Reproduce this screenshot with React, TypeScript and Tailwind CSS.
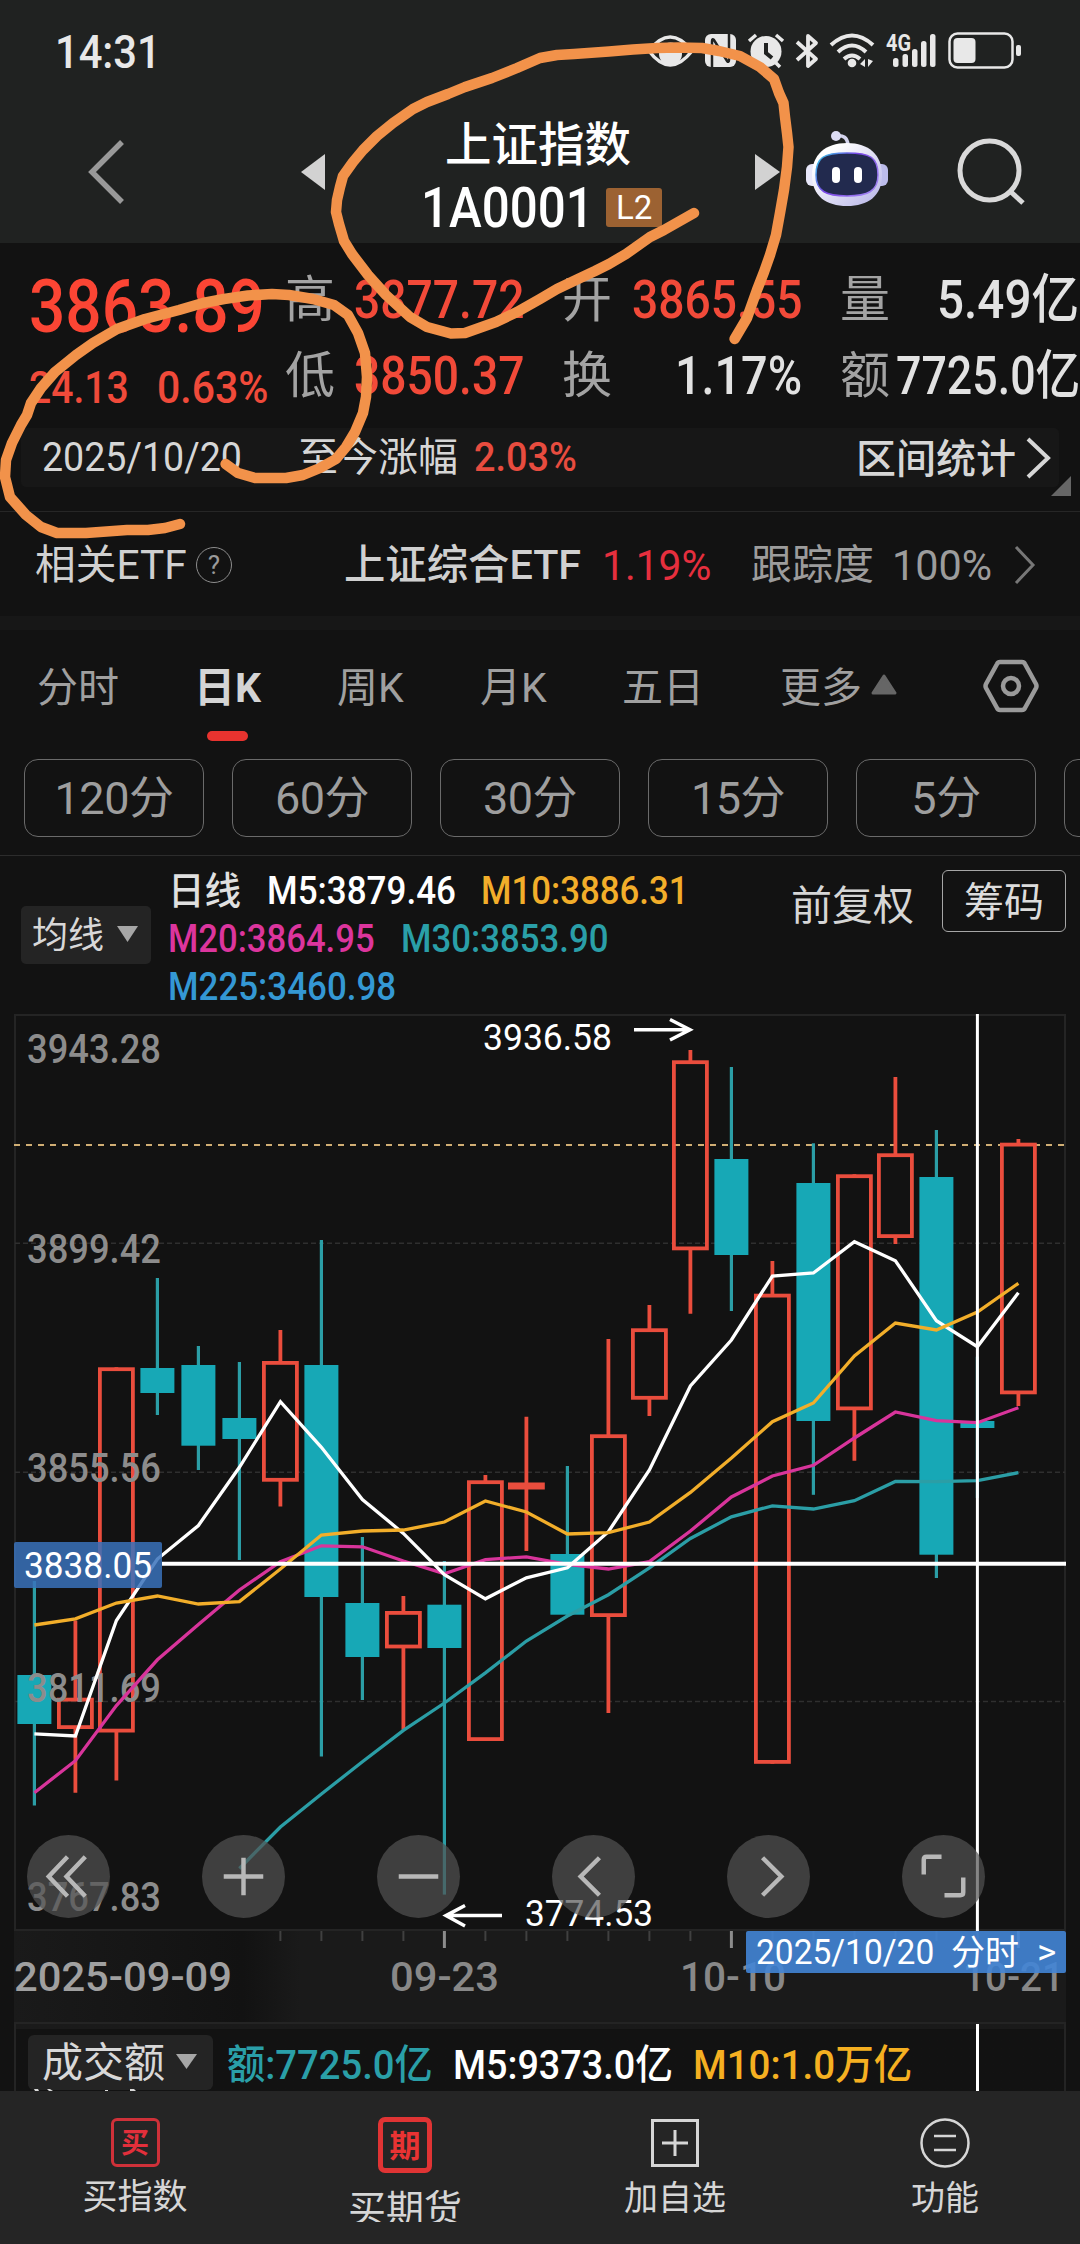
import { useLayoutEffect, useRef, useState } from "react";
import type { ReactNode } from "react";
import clsx from "clsx";

type Candle = { up: boolean; high: number; top: number; bottom: number; low: number };

const step = 41;
const firstX = 34.4;
const xAt = (i: number) => firstX + i * step;

const candles: Candle[] = [
  { up: false, high: 1581, top: 1675, bottom: 1724, low: 1805.5 },
  { up: true, high: 1620.5, top: 1697.7, bottom: 1729, low: 1792.7 },
  { up: true, high: 1367.3, top: 1367.3, bottom: 1732.5, low: 1780.6 },
  { up: false, high: 1278, top: 1368, bottom: 1393, low: 1415 },
  { up: false, high: 1346, top: 1365, bottom: 1445.7, low: 1470 },
  { up: false, high: 1362, top: 1418, bottom: 1439, low: 1560 },
  { up: true, high: 1330, top: 1361, bottom: 1481.7, low: 1506.5 },
  { up: false, high: 1240, top: 1365, bottom: 1597, low: 1756.5 },
  { up: false, high: 1537, top: 1603, bottom: 1657, low: 1700 },
  { up: true, high: 1596, top: 1611, bottom: 1648.4, low: 1729.7 },
  { up: false, high: 1561, top: 1604.7, bottom: 1648, low: 1894.6 },
  { up: true, high: 1475, top: 1480.3, bottom: 1741, low: 1741 },
  { up: true, high: 1416.7, top: 1482.5, bottom: 1489.5, low: 1551 },
  { up: false, high: 1466, top: 1554, bottom: 1614.7, low: 1614.7 },
  { up: true, high: 1339, top: 1434.3, bottom: 1617, low: 1713 },
  { up: true, high: 1305, top: 1328.3, bottom: 1399.7, low: 1416 },
  { up: true, high: 1050, top: 1060.3, bottom: 1250.3, low: 1313.7 },
  { up: false, high: 1067, top: 1159, bottom: 1255, low: 1311 },
  { up: true, high: 1261, top: 1293.7, bottom: 1763.8, low: 1763.8 },
  { up: false, high: 1143.3, top: 1183, bottom: 1421, low: 1494.8 },
  { up: true, high: 1174.3, top: 1174.3, bottom: 1410.3, low: 1460.7 },
  { up: true, high: 1077, top: 1153.3, bottom: 1238, low: 1244 },
  { up: false, high: 1130, top: 1177, bottom: 1554.7, low: 1578 },
  { up: false, high: 1356.7, top: 1421, bottom: 1428, low: 1498 },
  { up: true, high: 1139, top: 1142.7, bottom: 1394.3, low: 1406 },
];

const averages = [
  { color: "#2b9ea6", from: 5, ys: [1868.5, 1827, 1794, 1761.7, 1730.4, 1703, 1672.9, 1641, 1616, 1594.7, 1567.8, 1538.5, 1516.8, 1505.8, 1509, 1500.7, 1481.4, 1481.7, 1480.7, 1472.7] },
  { color: "#d8349b", from: 0, ys: [1792.7, 1760.7, 1705.6, 1659.8, 1624.6, 1590, 1561.6, 1545.8, 1546.8, 1561, 1573.7, 1559.6, 1556.8, 1564.4, 1569, 1561.6, 1531, 1497, 1476, 1465.3, 1438, 1412, 1420.7, 1422.7, 1407.7] },
  { color: "#ffffff", from: 0, ys: [1733.8, 1736, 1620.5, 1559, 1525.5, 1467.3, 1401.7, 1447.3, 1499.6, 1533.4, 1574.7, 1598.8, 1577.8, 1567.8, 1531.7, 1470, 1386, 1340, 1276, 1273, 1241.7, 1260.7, 1320.7, 1346.7, 1292.7] },
  { color: "#f2ae2a", from: 0, ys: [1625, 1618.8, 1603, 1596, 1604, 1601.6, 1569, 1535, 1531, 1530, 1522, 1501, 1512, 1534, 1532.7, 1522, 1492.4, 1458, 1421.7, 1403, 1356, 1323, 1330, 1312, 1283.3] },
];

const priceLabels = [
  { text: "3943.28", y: 1062.7 },
  { text: "3899.42", y: 1262.7 },
  { text: "3855.56", y: 1481.7 },
  { text: "3811.69", y: 1702 },
  { text: "3767.83", y: 1910.5 },
];

const dateLabels = [
  { text: "2025-09-09", x: 14, width: 218, color: "#a0a0a0" },
  { text: "09-23", x: 390, width: 109, color: "#888888" },
  { text: "10-10", x: 680, width: 106, color: "#888888" },
  { text: "10-21", x: 963, width: 101, color: "#888888" },
];

const markerStrokes = [
  "694,213 664,230 650,237 626,254 609,264 595,271 578,279 557,289 540,299 517,312 496,322 465,333 451,333.5 427,327 410,317 386,295 368,275 352,254 344,241 339,224 336,212 337,200 340,187 343,176 353,162 363,150 377,136 393,123 413,109 427,102 448,94 465,87 492,78 517,68 540,58 557,55 574,54 609,51.5 633,49.5 657,48 678,47.5 702,48 719,51 740,56 760,67 774,79 779,93 783.5,103 785,117 787,133 788.5,147 787,167 784,190 780,213 776,235 770,255 764,272 757,290 747,318 734.6,339",
  "225.6,464 238,473 255,478 286,478 303,475 320,468 336,459 346,447 355,432 363,413 366,397 367,377 365,353 358,333 348,315 334,305 313,299 289,295 272,294 248,295.5 224,299 203,303 179,310 145,319 117,329 93,343 76,355 55,372 41,388 31,403 27,415 21,425 12,443 6,460 5,477 10,497 26,515 41,527 57,533 86,533 127,530 148,530 165,528 180,524",
];

/* Squeezes one line of text into the width of its box */
function Fit({ className, children }: { className?: string; children: ReactNode }) {
  const box = useRef<HTMLSpanElement>(null);
  const inner = useRef<HTMLSpanElement>(null);
  const [ratio, setRatio] = useState(1);

  useLayoutEffect(() => {
    if (box.current && inner.current && inner.current.offsetWidth) {
      setRatio(box.current.clientWidth / inner.current.offsetWidth);
    }
  }, [children]);

  return (
    <span ref={box} className={clsx("block shrink-0 whitespace-nowrap leading-none", className)}>
      <span ref={inner} className="inline-block origin-left whitespace-pre align-top" style={{ transform: `scaleX(${ratio})` }}>
        {children}
      </span>
    </span>
  );
}

function StatusBar() {
  return (
    <div className="flex h-[102px] items-center justify-between pl-[55px] pr-[55px]">
      <Fit className="mt-px w-[106px] text-[46px] font-medium text-[#e8e8e8]">14:31</Fit>
      <svg width="380" height="44" viewBox="645 29 380 44" fill="#e8e8e8">
        <path d="M649 51Q670 23 692 51Q670 79 649 51Z" fill="none" stroke="#e8e8e8" strokeWidth="3.5" />
        <circle cx="670.5" cy="54" r="11.5" />
        <rect x="705" y="34" width="31" height="33" rx="6" />
        <path d="M712 67V41Q712 38 714 40L727 61Q729 63 729 60V34" fill="none" stroke="#202221" strokeWidth="2.500" />
        <circle cx="766" cy="51.5" r="15.5" />
        <path d="M749 41L756 35M776 35L783 41M757 62L752 67M775 62L780 67" stroke="#e8e8e8" strokeWidth="3.5" />
        <path d="M766 43V53L772 58" fill="none" stroke="#202221" strokeWidth="4" />
        <path d="M797 42L816 59L808 66V36L816 43L797 60" fill="none" stroke="#e8e8e8" strokeWidth="3.8" strokeLinejoin="round" />
        <path d="M831 45Q852 26 873 45M838 52Q852 39 866 52M844 59Q852 52 860 59" fill="none" stroke="#e8e8e8" strokeWidth="4" />
        <circle cx="852" cy="63" r="4.3" />
        <path d="M860 64L865 59V67ZM873 61L868 67V59Z" />
        <text x="886" y="51" className="font-[Roboto] text-[24px] font-bold" textLength="25" lengthAdjust="spacingAndGlyphs">4G</text>
        <rect x="893" y="58" width="5.5" height="9" rx="2.5" />
        <rect x="902.5" y="54" width="5.5" height="13" rx="2.5" />
        <rect x="912" y="49" width="5.5" height="18" rx="2.5" />
        <rect x="921" y="41" width="5.5" height="26" rx="2.5" />
        <rect x="930" y="34" width="5.5" height="33" rx="2.5" />
        <rect x="949.5" y="33.5" width="63" height="34" rx="8" fill="none" stroke="#e8e8e8" strokeWidth="2.5" />
        <rect x="953.5" y="38" width="22" height="25" rx="4" />
        <rect x="1016" y="45" width="5" height="11" rx="2" />
      </svg>
    </div>
  );
}

function Robot() {
  return (
    <svg width="82" height="76" viewBox="0 0 82 76" className="shrink-0">
      <defs>
        <linearGradient id="shell" x1="0" y1="0" x2="1" y2="1">
          <stop offset="0.2" stopColor="#ffffff" />
          <stop offset="1" stopColor="#b4b2e6" />
        </linearGradient>
        <linearGradient id="rim" x1="0" y1="0" x2="1" y2="0.6">
          <stop offset="0" stopColor="#2fd0e6" />
          <stop offset="0.5" stopColor="#7a45e8" />
          <stop offset="1" stopColor="#9b7cf0" />
        </linearGradient>
      </defs>
      <path d="M30 5Q41 3 42 14" fill="none" stroke="#d4d4ee" strokeWidth="3.5" />
      <circle cx="30" cy="5" r="5" fill="#dcdcf4" />
      <rect x="0" y="33" width="14" height="22" rx="6" fill="#e8e8fa" />
      <rect x="68" y="33" width="14" height="22" rx="6" fill="#bcbcea" />
      <path d="M41 12C63 12 76 24 76 44C76 65 62 75 41 75C20 75 6 65 6 44C6 24 19 12 41 12Z" fill="url(#shell)" />
      <path d="M41 22C64 22 72 26 72 44C72 60 62 65 41 65C20 65 10 60 10 44C10 26 18 22 41 22Z" fill="#222a4e" stroke="url(#rim)" strokeWidth="1.5" />
      <rect x="26" y="36" width="8" height="16" rx="4" fill="#ffffff" />
      <rect x="48" y="36" width="8" height="16" rx="4" fill="#ffffff" />
    </svg>
  );
}

function Header() {
  return (
    <div className="flex h-[141px] pl-[88px]">
      <svg width="38" height="66" viewBox="0 0 38 66" className="mt-[37px]">
        <path d="M34 3L4 33L34 63" fill="none" stroke="#999999" strokeWidth="5.5" />
      </svg>
      <svg width="24" height="36" viewBox="0 0 24 36" className="ml-[175px] mt-[52px]">
        <path d="M24 0V36L0 18Z" fill="#d2d2d2" />
      </svg>
      <div className="ml-[96px] flex w-[244px] flex-col text-white">
        <div className="ml-[24px] mt-[20px] text-[46.5px] font-medium leading-none">上证指数</div>
        <div className="mt-[11px] flex items-center">
          <Fit className="mt-px w-[173px] text-[55px] font-medium">1A0001</Fit>
          <span className="ml-[12px] flex h-[39px] w-[56px] items-center justify-center rounded-[3px] bg-[#9c6232]">
            <Fit className="w-[36px] text-[33px]">L2</Fit>
          </span>
        </div>
      </div>
      <svg width="25" height="36" viewBox="0 0 25 36" className="ml-[90px] mt-[52px]">
        <path d="M0 0V36L25 18Z" fill="#d2d2d2" />
      </svg>
      <div className="ml-[26px] mt-[29px]">
        <Robot />
      </div>
      <svg width="70" height="68" viewBox="0 0 70 68" className="ml-[68px] mt-[35px]">
        <circle cx="33.5" cy="33.5" r="29.5" fill="none" stroke="#d9d9d9" strokeWidth="5" />
        <path d="M55 55L67 66" stroke="#d9d9d9" strokeWidth="5" />
      </svg>
    </div>
  );
}

function Quote() {
  return (
    <section className="h-[269px] border-b border-[#262626] pt-[19px]">
      <div className="flex">
        <div className="w-[285px] pl-[29px] pt-[8px] font-medium text-[#fb4534]">
          <Fit className="w-[236px] text-[74px]">3863.89</Fit>
          <div className="mt-[21px] flex text-[#f04a3a]">
            <Fit className="w-[100px] text-[45px]">24.13</Fit>
            <Fit className="ml-[28px] w-[111px] text-[45px]">0.63%</Fit>
          </div>
        </div>
        <div className="text-[53px] leading-none">
          <div className="flex h-[76px] items-center">
            <span className="w-[50px] text-[50px] text-[#a3a3a3]">高</span>
            <Fit className="ml-[19px] w-[170px] font-medium text-[#f24a39]">3877.72</Fit>
            <span className="ml-[38px] w-[50px] text-[50px] text-[#a3a3a3]">开</span>
            <Fit className="ml-[20px] w-[170px] font-medium text-[#f24a39]">3865.55</Fit>
            <span className="ml-[38px] w-[50px] text-[50px] text-[#a3a3a3]">量</span>
            <Fit className="ml-[47px] w-[142px] font-medium text-[#e2e2e2]">5.49亿</Fit>
          </div>
          <div className="flex h-[76px] items-center">
            <span className="w-[50px] text-[50px] text-[#a3a3a3]">低</span>
            <Fit className="ml-[19px] w-[170px] font-medium text-[#f24a39]">3850.37</Fit>
            <span className="ml-[38px] w-[50px] text-[50px] text-[#a3a3a3]">换</span>
            <Fit className="ml-[63px] w-[127px] font-medium text-[#e2e2e2]">1.17%</Fit>
            <span className="ml-[38px] w-[50px] text-[50px] text-[#a3a3a3]">额</span>
            <Fit className="ml-[6px] w-[184px] font-medium text-[#e2e2e2]">7725.0亿</Fit>
          </div>
        </div>
      </div>

      <div className="relative ml-[21px] mt-[14px] flex h-[59px] w-[1038px] items-center rounded-[5px] bg-[#171717] text-[40px] leading-none text-[#d6d6d6]">
        <Fit className="ml-[21px] w-[200px]">2025/10/20</Fit>
        <span className="ml-[56px] text-[40px]">至今涨幅</span>
        <Fit className="ml-[16px] w-[103px] font-medium text-[#e84c3f]">2.03%</Fit>
        <span className="ml-[279px] mt-[5px] text-[40px] font-medium">区间统计</span>
        <svg width="26" height="42" viewBox="0 0 26 42" className="ml-[9px]">
          <path d="M3 2L23 21L3 40" fill="none" stroke="#d6d6d6" strokeWidth="4" />
        </svg>
        <svg width="20" height="20" viewBox="0 0 20 20" className="absolute -right-[12px] top-[48px]">
          <path d="M20 0V20H0Z" fill="#666666" />
        </svg>
      </div>
    </section>
  );
}

function EtfRow() {
  return (
    <section className="flex h-[104px] items-center pt-[2px] text-[41px] leading-none text-[#d0d0d0]">
      <Fit className="ml-[35px] w-[152px]">相关ETF</Fit>
      <span className="ml-[9px] flex h-[36px] w-[36px] items-center justify-center rounded-full border-[1.5px] border-[#8d8d8d] text-[26px] text-[#9a9a9a]">?</span>
      <Fit className="ml-[112px] w-[237px] font-medium">上证综合ETF</Fit>
      <Fit className="ml-[21px] w-[109px] text-[43px] text-[#e62f3e]">1.19%</Fit>
      <span className="ml-[40px] w-[123px] text-[#9c9c9c]">跟踪度</span>
      <Fit className="ml-[18px] w-[100px] text-[43px] text-[#9c9c9c]">100%</Fit>
      <svg width="24" height="40" viewBox="0 0 24 40" className="ml-[21px]">
        <path d="M3 2L20 20L3 38" fill="none" stroke="#777777" strokeWidth="3" />
      </svg>
    </section>
  );
}

function Tabs() {
  return (
    <section className="flex h-[129px] items-start pt-[37px] text-[41px] leading-[42px] text-[#a0a0a0]">
      <span className="ml-[37px] w-[82px]">分时</span>
      <span className="ml-[74px] flex w-[69px] flex-col items-center font-bold text-[#d4d4d4]">
        <span>日K</span>
        <span className="mt-[22px] h-[10px] w-[41px] rounded-full bg-[#e8332f]" />
      </span>
      <span className="ml-[75px] w-[69px]">周K</span>
      <span className="ml-[74px] w-[69px]">月K</span>
      <span className="ml-[73px] w-[82px]">五日</span>
      <span className="ml-[76px] w-[82px]">更多</span>
      <svg width="26" height="21" viewBox="0 0 26 21" className="ml-[9px] mt-[7px]">
        <path d="M13 2L24 19H2Z" fill="#666666" stroke="#666666" strokeWidth="3" strokeLinejoin="round" />
      </svg>
      <svg width="56" height="54" viewBox="0 0 56 54" className="ml-[86px] mt-[-8px]" fill="none" stroke="#9a9a9a">
        <path d="M17 3H39Q41 3 42 5L53 25Q54 27 53 29L42 49Q41 51 39 51H17Q15 51 14 49L3 29Q2 27 3 25L14 5Q15 3 17 3Z" strokeWidth="4.5" />
        <circle cx="28" cy="27" r="8" strokeWidth="4.5" />
      </svg>
    </section>
  );
}

function Periods() {
  return (
    <section className="h-[97px] overflow-hidden border-b border-[#2c2c2c]">
      <div className="flex w-[1300px] gap-[28px] pl-[24px]">
        {["120分", "60分", "30分", "15分", "5分", "1分"].map((name) => (
          <div key={name} className="flex h-[78px] w-[180px] shrink-0 items-center justify-center rounded-[14px] border border-[#6a6a6a] text-[45px] leading-none tracking-[-0.5px] text-[#9e9e9e]">
            {name}
          </div>
        ))}
      </div>
    </section>
  );
}

function Legend() {
  return (
    <section className="flex h-[158px] pl-[21px] leading-none">
      <div className="mt-[50px] flex h-[58px] w-[130px] items-center rounded-[5px] bg-[#242424] pl-[11px] pt-[2px] text-[36px] text-[#d8d8d8]">
        均线
        <svg width="21" height="16" viewBox="0 0 21 16" className="-mt-[4px] ml-[13px]">
          <path d="M0 0H21L10.5 16Z" fill="#a6a6a6" />
        </svg>
      </div>
      <div className="ml-[17px] mt-[16px] flex w-[560px] flex-col gap-[10px] text-[38px] font-medium">
        <div className="flex">
          <Fit className="w-[73px] text-[#e0e0e0]">日线</Fit>
          <Fit className="ml-[26px] w-[189px] text-white">M5:3879.46</Fit>
          <Fit className="ml-[25px] w-[208px] text-[#f2ae2a]">M10:3886.31</Fit>
        </div>
        <div className="flex">
          <Fit className="w-[207px] text-[#dc359d]">M20:3864.95</Fit>
          <Fit className="ml-[26px] w-[208px] text-[#2a9fa8]">M30:3853.90</Fit>
        </div>
        <Fit className="w-[228px] text-[#3498d4]">M225:3460.98</Fit>
      </div>
      <span className="ml-[63px] mt-[30px] w-[123px] text-[41px] text-[#d6d6d6]">前复权</span>
      <div className="ml-[28px] mt-[14px] flex h-[62px] w-[124px] items-center justify-center rounded-[6px] border border-[#a6a6a6] pt-[3px] text-[40px] text-[#dcdcdc]">
        筹码
      </div>
    </section>
  );
}

function Chart() {
  return (
    <svg width="1080" height="1008" viewBox="0 1014 1080 1008" className="block font-[Roboto]">
      <defs>
        <linearGradient id="axisFade" x1="0" y1="0" x2="1" y2="0">
          <stop offset="0" stopColor="#1a1a1a" />
          <stop offset="0.4" stopColor="#161616" />
          <stop offset="0.8" stopColor="#121212" />
          <stop offset="1" stopColor="#1a1a1a" />
        </linearGradient>
      </defs>

      {/* frame and grid */}
      <rect x="15" y="1015" width="1050" height="915" fill="none" stroke="#242424" strokeWidth="2" />
      {[1243.3, 1472.3, 1701.5].map((y) => (
        <path key={y} d={`M15 ${y}H1065`} stroke="#2f2f2f" strokeWidth="1.5" strokeDasharray="5 3" />
      ))}
      <path d="M14 1145H1065" stroke="#d0ae74" strokeWidth="2" strokeDasharray="6 6" />

      {/* candles */}
      {candles.map((c, i) => {
        const x = xAt(i);
        if (!c.up) {
          return (
            <g key={i} fill="#17a8b6">
              <rect x={x - 1.6} y={c.high} width="3.2" height={c.low - c.high} fill="#2b9ea6" />
              <rect x={x - 17} y={c.top} width="34" height={c.bottom - c.top} />
            </g>
          );
        }
        return (
          <g key={i} fill="none" stroke="#ea4d3d" strokeWidth="3.8">
            <path d={`M${x} ${c.high}V${c.top + 1}M${x} ${c.bottom - 1}V${c.low}`} />
            <rect x={x - 16.5} y={c.top + 1.9} width="33" height={c.bottom - c.top - 3.8} />
          </g>
        );
      })}

      {priceLabels.map((l) => (
        <text key={l.text} x="27" y={l.y} fill="#8c8c8c" textLength="134" lengthAdjust="spacingAndGlyphs" className="text-[40px] font-medium">
          {l.text}
        </text>
      ))}

      {averages.map((a) => (
        <polyline
          key={a.color}
          points={a.ys.map((y, i) => `${xAt(i + a.from)},${y}`).join(" ")}
          fill="none"
          stroke={a.color}
          strokeWidth="3.3"
        />
      ))}

      {/* highest and lowest price */}
      <g fill="none" stroke="#ffffff" strokeWidth="3.5">
        <path d="M634 1029.7H690M670 1019.500L690 1029.7L670 1040" />
        <path d="M502 1915.6H446M465 1905.500L446 1915.6L465 1926" />
      </g>
      <g fill="#ffffff" className="text-[37px]">
        <text x="483" y="1050" textLength="129" lengthAdjust="spacingAndGlyphs">3936.58</text>
        <text x="525" y="1926" textLength="128" lengthAdjust="spacingAndGlyphs">3774.53</text>
      </g>

      {/* crosshair */}
      <path d="M977.4 1014V1931" stroke="#ffffff" strokeWidth="3" />
      <path d="M162 1563.7H1066" stroke="#ffffff" strokeWidth="4" />
      <rect x="14" y="1542" width="148" height="46" rx="2" fill="#3a72bb" fillOpacity="0.85" />
      <text x="24" y="1578" fill="#ffffff" textLength="128" lengthAdjust="spacingAndGlyphs" className="text-[37px]">3838.05</text>

      {/* date axis */}
      <rect x="14" y="1931" width="1052" height="91" fill="#1a1a1a" />
      <rect x="14" y="1931" width="286" height="91" fill="url(#axisFade)" />
      {candles.map((_, i) =>
        i < 6 ? null : i % 7 === 3 ? (
          <path key={i} d={`M${xAt(i)} 1931V1948`} stroke="#8c8c8c" strokeWidth="3" />
        ) : (
          <path key={i} d={`M${xAt(i)} 1931V1941`} stroke="#404040" strokeWidth="2" />
        )
      )}
      {dateLabels.map((l) => (
        <text key={l.text} x={l.x} y="1991" fill={l.color} textLength={l.width} lengthAdjust="spacingAndGlyphs" className="text-[41px] font-medium">
          {l.text}
        </text>
      ))}
    </svg>
  );
}

const controls = [
  "M41 22L22 42L41 62M59 22L40 42L59 62",
  "M42 23V61M22 42H62",
  "M22 42H62",
  "M48 23L29 42L48 61",
  "M36 23L55 42L36 61",
  "M22 40V25Q22 22 25 22H40M62 43V58Q62 61 59 61H43",
];

function ChartArea() {
  return (
    <section className="relative">
      <Chart />
      <div className="absolute left-[27px] top-[821px] flex gap-[92px]">
        {controls.map((d) => (
          <button key={d} className="h-[83px] w-[83px] rounded-full bg-[#525252]/70">
            <svg width="83" height="83" viewBox="0 0 84 84">
              <path d={d} fill="none" stroke="#b8b8b8" strokeWidth="4.5" />
            </svg>
          </button>
        ))}
      </div>
      <div className="absolute left-[746px] top-[917px] flex h-[42px] w-[320px] items-center rounded-[2px] bg-[#4285d6]/90 text-[35px] leading-none text-white">
        <Fit className="ml-[10px] mt-px w-[178px]">2025/10/20</Fit>
        <Fit className="ml-[17px] mt-[2px] w-[68px]">分时</Fit>
        <Fit className="ml-[18px] w-[19px]">&gt;</Fit>
      </div>
    </section>
  );
}

function Volume() {
  return (
    <section className="relative mx-[14px] flex h-[69px] items-start overflow-hidden border-x-2 border-t-2 border-[#242424] bg-linear-to-b from-[#1a1a1a] from-[5px] to-[#121212] to-[5px] text-[41px] font-medium leading-none">
      <div className="ml-[12px] mt-[11px] flex h-[55px] w-[185px] items-center rounded-[6px] bg-[#242424] pl-[14px] pt-[2px] font-normal text-[#d8d8d8]">
        成交额
        <svg width="21" height="15" viewBox="0 0 21 15" className="-mt-[4px] ml-[11px]">
          <path d="M0 0H21L10.5 15Z" fill="#a6a6a6" />
        </svg>
      </div>
      <Fit className="ml-[14px] mt-[21px] w-[206px] text-[#2a9fa8]">额:7725.0亿</Fit>
      <Fit className="ml-[20px] mt-[21px] w-[220px] text-white">M5:9373.0亿</Fit>
      <Fit className="ml-[20px] mt-[21px] w-[219px] text-[#f5b021]">M10:1.0万亿</Fit>
      <span className="ml-[64px] h-full w-[3px] shrink-0 bg-white" />
      {/* tops of the next legend line */}
      <svg width="110" height="2" viewBox="0 0 110 2" className="absolute bottom-0 left-[18px]">
        <path d="M0 0H4L5 2H1ZM13 0H16L19 2H15ZM71 1H74V2H71ZM96 0H100L102 2H96Z" fill="#d8d8d8" />
      </svg>
    </section>
  );
}

function BottomNav() {
  return (
    <nav className="grid h-[153px] grid-cols-4 bg-[#252525] leading-none text-[#d6d6d6]">
      <div className="flex flex-col items-center pt-[27px]">
        <span className="flex h-[49px] w-[49px] items-center justify-center rounded-[6px] border-[3px] border-[#cf3139] pt-[3px] text-[28px] font-bold text-[#e32f3b]">买</span>
        <span className="mt-[13px] text-[35px]">买指数</span>
      </div>
      <div className="flex flex-col items-center pt-[26px]">
        <span className="flex h-[56px] w-[54px] items-center justify-center rounded-[7px] border-[5px] border-[#e03434] pt-[2px] text-[31px] font-bold text-[#e93333]">期</span>
        <span className="mt-[17px] h-[32px] overflow-hidden text-[38px]">买期货</span>
      </div>
      <div className="flex flex-col items-center pt-[28px]">
        <svg width="48" height="48" viewBox="0 0 48 48" fill="none" stroke="#d6d6d6" strokeWidth="3">
          <rect x="1.5" y="1.5" width="45" height="45" />
          <path d="M24 11V37M11 24H37" />
        </svg>
        <span className="mt-[14px] text-[34px]">加自选</span>
      </div>
      <div className="flex flex-col items-center pt-[27px]">
        <svg width="50" height="50" viewBox="0 0 50 50" fill="none" stroke="#d6d6d6" strokeWidth="2.5">
          <circle cx="25" cy="25" r="23.5" />
          <path d="M14 18H36M14 32H36" />
        </svg>
        <span className="mt-[13px] text-[34px]">功能</span>
      </div>
    </nav>
  );
}

export default function App() {
  return (
    <div className="relative h-[2244px] w-[1080px] overflow-hidden bg-[#121212] font-[Roboto,'Noto_Sans_CJK_SC',sans-serif]">
      <header className="bg-[#202221]">
        <StatusBar />
        <Header />
      </header>
      <Quote />
      <EtfRow />
      <div className="h-[14px] bg-[#171717]" />
      <Tabs />
      <Periods />
      <Legend />
      <ChartArea />
      <Volume />
      <BottomNav />

      {/* freehand marker */}
      <svg width="1080" height="600" viewBox="0 0 1080 600" className="pointer-events-none absolute left-0 top-0">
        {markerStrokes.map((points) => (
          <polyline key={points} points={points} fill="none" stroke="#f2924a" strokeWidth="10.5" strokeLinecap="round" strokeLinejoin="round" />
        ))}
      </svg>
    </div>
  );
}
